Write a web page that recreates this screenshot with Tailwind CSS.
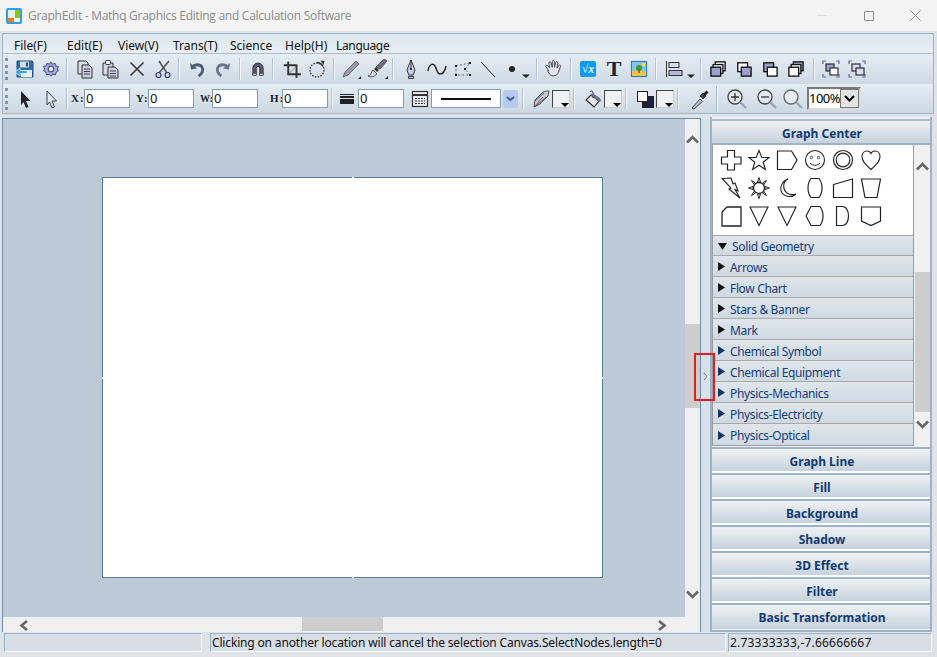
<!DOCTYPE html>
<html><head><meta charset="utf-8"><script src="https://cdn.jsdelivr.net/npm/@tailwindcss/browser@4"></script></head>
<body class="m-0 overflow-hidden">
<div class="w-[937px] h-[657px] overflow-hidden flex flex-col bg-[#dfe3e8] font-['Noto_Sans','Open_Sans',sans-serif] text-[12px] leading-none text-black">

<!-- title bar -->
<div class="h-[31px] shrink-0 bg-[#f3f3f3] flex items-center relative">
  <svg class="ml-[6px] w-[16px] h-[16px]" viewBox="0 0 16 16"><rect width="16" height="16" rx="2" fill="#2a9ee8"/><rect x="2" y="2" width="7" height="8" fill="#e8f3e0"/><rect x="9" y="2" width="5" height="8" fill="#8cc814"/><rect x="2" y="10" width="6" height="4" fill="#f07a1c"/><rect x="8" y="10" width="6" height="4" fill="#f4f4f4"/></svg>
  <span class="ml-[6px] text-[#8a8a8a] text-[12px] tracking-[-0.27px] font-['Open_Sans']">GraphEdit - Mathq Graphics Editing and Calculation Software</span>
  <div class="ml-auto flex items-center">
    <div class="w-[10px] h-px bg-[#dcdcdc] mr-[37px]"></div>
    <div class="w-[10px] h-[10px] border border-[#8a8a8a] rounded-[1px] mr-[36px]"></div>
    <svg class="w-[11px] h-[11px] mr-[16px]" viewBox="0 0 11 11"><path d="M.5.5l10 10M10.500.5l-10 10" stroke="#8a8a8a" fill="none"/></svg>
  </div>
</div>
<div class="h-[2px] shrink-0"></div>

<!-- bars -->
<div class="mx-[2px] w-[932px] shrink-0 border border-[#9db4c8] h-[81px] flex flex-col overflow-hidden">
  <!-- menu -->
  <div class="h-[20px] shrink-0 bg-gradient-to-b from-[#dce6ef] to-[#e8eef4] border-b border-[#a9bfd0] flex items-center text-[#111] text-[12px] pt-[4px]">
    <span class="ml-[11px] w-[53px]">File(F)</span>
    <span class="w-[51px]">Edit(E)</span>
    <span class="w-[55px]">View(V)</span>
    <span class="w-[57px]">Trans(T)</span>
    <span class="w-[55px]">Science</span>
    <span class="w-[51px]">Help(H)</span>
    <span class="tracking-[-0.35px]">Language</span>
  </div>
  <!-- toolbar 1 -->
  <div class="h-[30px] shrink-0 bg-gradient-to-b from-[#e6edf4] to-[#ced9e3] flex items-center">
    <div class="ml-[2px] w-[3px] h-[22px] border-l-[3px] border-dotted border-[#7f97ad]"></div>
    <svg class="ml-[5px] w-[24px] h-[24px]" viewBox="0 0 24 24"><path d="M4 4h15l1 1v15H4z" fill="#2d6cab" stroke="#27507c"/><rect x="7" y="4.500" width="9" height="6" fill="#d4dde6"/><rect x="13" y="5.500" width="2" height="4" fill="#27507c"/><rect x="8" y="13" width="11" height="7" fill="#e8eef4"/><path d="M2 15l5-4v2.500h7v3H7V19z" fill="#35a0ee" stroke="#fff" stroke-width=".7"/></svg>
    <svg class="ml-[2px] w-[24px] h-[24px]" viewBox="-3 -3 30 30"><path d="M12 3.500l2 2.500 3-1 1 3 3 1-1 3 1 2-2.500 2-1 3-3-.5-2.500 2-2.500-2-3 .5-1-3L3 14l1-2-1-3 3-1 1-3 3 1z" fill="#a9afe0" stroke="#4c5190" stroke-width="1.300"/><circle cx="12" cy="12" r="3.500" fill="#e8ecf7" stroke="#4c5190" stroke-width="1.500"/></svg>
    <div class="ml-[3px] w-[2px] h-[22px] bg-[#f3f6f9] border-l border-[#b4c4d2]"></div>
    <svg class="ml-[5px] w-[24px] h-[24px]" viewBox="0 0 24 24"><path d="M5 4h8l2 2v11H5z" fill="#d8dbe8" stroke="#333"/><path d="M9 8h7l3 3v10H9z" fill="#c9cde4" stroke="#333"/><path d="M11 12h6M11 14.500h6M11 17h6" stroke="#444"/></svg>
    <svg class="ml-[1px] w-[24px] h-[24px]" viewBox="0 0 24 24"><path d="M5 6h10v12H5z" fill="#d5d8e8" stroke="#333"/><rect x="7.500" y="3.500" width="5" height="4" rx="1" fill="#eef" stroke="#333"/><path d="M10 10h7l3 3v8H10z" fill="#ccd0e6" stroke="#333"/><path d="M12 14h6M12 16.500h6M12 19h6" stroke="#444"/></svg>
    <svg class="ml-[3px] w-[24px] h-[24px]" viewBox="0 0 24 24"><path d="M5.500 5.500l13 13M18.500 5.500l-13 13" stroke="#333" stroke-width="1.500" fill="none"/></svg>
    <svg class="ml-[2px] w-[24px] h-[24px]" viewBox="0 0 24 24"><path d="M8 4l8 12M18 4L8 16" stroke="#555" stroke-width="1.600" fill="none"/><circle cx="7.500" cy="18" r="2.500" fill="none" stroke="#34348a" stroke-width="1.200"/><circle cx="16.500" cy="18" r="2.500" fill="none" stroke="#34348a" stroke-width="1.200"/></svg>
    <div class="ml-[3px] w-[2px] h-[22px] bg-[#f3f6f9] border-l border-[#b4c4d2]"></div>
    <svg class="ml-[5px] w-[24px] h-[24px]" viewBox="0 0 24 24"><path d="M5 6l1 6.500 6-1z" fill="#4d5a78"/><path d="M7 10c3-3 8-3 10 0 2 3 0 7-3.500 9" fill="none" stroke="#4d5a78" stroke-width="2.800"/></svg>
    <svg class="ml-[2px] w-[24px] h-[24px]" viewBox="0 0 24 24"><path d="M19 6l-1 6.500-6-1z" fill="#6a7590"/><path d="M17 10c-3-3-8-3-10 0-2 3 0 7 3.500 9" fill="none" stroke="#6a7590" stroke-width="2.800"/></svg>
    <div class="ml-[4px] w-[2px] h-[22px] bg-[#f3f6f9] border-l border-[#b4c4d2]"></div>
    <svg class="ml-[5px] w-[24px] h-[24px]" viewBox="-2 -2 28 28"><path d="M6 19V11a6 6 0 0 1 12 0v8h-4v-8a2 2 0 0 0-4 0v8z" fill="#5a5a78" stroke="#2a2a3a"/><path d="M6 17h4v2.500H6zM14 17h4v2.500h-4z" fill="#ccc" stroke="#333" stroke-width=".7"/></svg>
    <div class="ml-[2px] w-[2px] h-[22px] bg-[#f3f6f9] border-l border-[#b4c4d2]"></div>
    <svg class="ml-[6px] w-[24px] h-[24px]" viewBox="-4 -4 32 32"><path d="M7 2v17h17" fill="none" stroke="#333" stroke-width="2.600"/><path d="M1 7h17v17" fill="none" stroke="#333" stroke-width="2.600"/><path d="M8 18L18 8" stroke="#666"/></svg>
    <svg class="ml-[1px] w-[24px] h-[24px]" viewBox="0 0 24 24"><circle cx="12" cy="13" r="7" fill="none" stroke="#333" stroke-width="1.300" stroke-dasharray="1.600 1.300"/><path d="M12 5.500a7 7 0 0 1 6 4" fill="none" stroke="#333" stroke-width="1.500"/><path d="M15.500 3.500l4 .5-1 4z" fill="#333"/></svg>
    <div class="ml-[4px] w-[2px] h-[22px] bg-[#f3f6f9] border-l border-[#b4c4d2]"></div>
    <svg class="ml-[4px] w-[24px] h-[24px]" viewBox="0 0 24 24"><path d="M4 20l2-5L17 4l3 3L9 18z" fill="#9a9aa8" stroke="#55556a" stroke-width=".8"/><path d="M19 22h3v-3z" fill="#222"/></svg>
    <svg class="ml-[2px] w-[24px] h-[24px]" viewBox="0 0 24 24"><path d="M3 19c3 0 3-4 5-6l4 4c-2 2-5 4-9 2z" fill="#d8d8e4" stroke="#333" stroke-width=".8"/><path d="M9 12l2-2 3 3-2 2z" fill="#333"/><path d="M11 10l8-8 3 2-7 8z" fill="#6d6d85" stroke="#333" stroke-width=".7"/><path d="M20 22h3v-3z" fill="#222"/></svg>
    <div class="ml-[3px] w-[2px] h-[22px] bg-[#f3f6f9] border-l border-[#b4c4d2]"></div>
    <svg class="ml-[5px] w-[24px] h-[24px]" viewBox="0 0 24 24"><path d="M12 3l4 10-1.800 5H9.800L8 13z" fill="#c8cce8" stroke="#222" stroke-width=".9"/><path d="M12 3v9" stroke="#222" stroke-width=".8"/><circle cx="12" cy="12" r="1.100" fill="#222"/><path d="M9.500 19.500h5v2h-5z" fill="#d8dcf0" stroke="#222" stroke-width=".9"/></svg>
    <svg class="ml-[2px] w-[24px] h-[24px]" viewBox="0 0 24 24"><path d="M3 14c1-7 5-8 7-5s2 8 5 8 5-3 6-8" fill="none" stroke="#222" stroke-width="1.400"/></svg>
    <svg class="ml-[2px] w-[24px] h-[24px]" viewBox="0 0 24 24"><path d="M5 9l14-3-5 6 5 6H5z" fill="none" stroke="#444" stroke-width=".8" stroke-dasharray="2 2"/><path d="M4 8h2v2H4zM18 5h2v2h-2zM13 11h2v2h-2zM18 17h2v2h-2zM4 17h2v2H4z" fill="#222"/></svg>
    <svg class="ml-[1px] w-[24px] h-[24px]" viewBox="0 0 24 24"><path d="M5 5l14 15" stroke="#222" stroke-width="1"/></svg>
    <svg class="w-[24px] h-[24px]" viewBox="0 0 24 24"><circle cx="12" cy="12" r="3" fill="#222"/></svg>
    <svg class="-ml-[2px] w-[8px] h-[24px]" viewBox="0 0 8 24"><path d="M0 17.500h8L4 21z" fill="#222"/></svg>
    <div class="ml-[6px] w-[2px] h-[22px] bg-[#f3f6f9] border-l border-[#b4c4d2]"></div>
    <svg class="ml-[4px] w-[24px] h-[24px]" viewBox="-2 -2 28 28"><path d="M6 14L2.500 9.500c-1-1.500 1-2.500 2-1.500L7 10.500 6 5c0-2 2-2 2.500 0l1.500 5V3.500c0-2 2.500-2 2.500 0V10l1.500-5.500c.5-2 2.500-1.500 2.500.5l-1 6 2-3c1-1.500 3-.5 2 1.500l-2.500 6.500c-1 2.500-2.500 4-5.500 4-4 0-5-2-7-6z" fill="#e6e6f0" stroke="#3f3f54" stroke-width="1.100"/></svg>
    <div class="ml-[4px] w-[2px] h-[22px] bg-[#f3f6f9] border-l border-[#b4c4d2]"></div>
    <div class="ml-[4px] w-[24px] h-[24px] flex items-center justify-center"><div class="w-[16px] h-[16px] rounded-[2px] bg-[#0a9bf5] text-white font-['Liberation_Serif'] font-bold italic text-[12px] flex items-center justify-center">√x</div></div>
    <div class="ml-[2px] w-[24px] h-[24px] flex items-center justify-center font-['Liberation_Serif'] font-bold text-[22px] text-[#1c2236]">T</div>
    <svg class="ml-[1px] w-[24px] h-[24px]" viewBox="0 0 24 24"><rect x="4.500" y="4.500" width="15" height="15" fill="#f7d25a" stroke="#2a80c8" stroke-width="1.200"/><rect x="5" y="5" width="14" height="9" fill="#7fc5ee"/><rect x="15" y="6" width="3" height="3" fill="#f8de50"/><rect x="5" y="14" width="14" height="5" fill="#f3c345"/><circle cx="12" cy="11" r="3" fill="#3f9a28"/><rect x="11.300" y="12" width="1.500" height="4" fill="#7a5a22"/></svg>
    <div class="ml-[4px] w-[2px] h-[22px] bg-[#f3f6f9] border-l border-[#b4c4d2]"></div>
    <svg class="ml-[5px] w-[24px] h-[24px]" viewBox="0 0 24 24"><path d="M4.500 4v16" stroke="#333"/><rect x="7" y="5.500" width="10" height="5" fill="#d8dcf0" stroke="#333"/><rect x="7" y="13.500" width="13" height="5" fill="#b4b8e2" stroke="#333"/></svg>
    <svg class="ml-[1px] w-[8px] h-[24px]" viewBox="0 0 8 24"><path d="M0 17.500h8L4 21z" fill="#222"/></svg>
    <div class="ml-[5px] w-[2px] h-[22px] bg-[#f3f6f9] border-l border-[#b4c4d2]"></div>
    <svg class="ml-[4px] w-[24px] h-[24px]" viewBox="-1.500 -1.500 27 27"><rect x="9" y="4" width="11" height="10" fill="#fff" stroke="#111" stroke-width="1.500"/><rect x="6.500" y="7" width="11" height="10" fill="#fff" stroke="#111" stroke-width="1.500"/><rect x="4" y="10" width="11" height="10" fill="#9c9fd0" stroke="#111" stroke-width="1.500"/></svg>
    <svg class="ml-[2px] w-[24px] h-[24px]" viewBox="-1.500 -1.500 27 27"><rect x="5" y="5" width="11" height="10" fill="#fff" stroke="#111" stroke-width="1.500"/><rect x="9" y="10" width="11" height="10" fill="#9c9fd0" stroke="#111" stroke-width="1.500"/></svg>
    <svg class="ml-[2px] w-[24px] h-[24px]" viewBox="-1.500 -1.500 27 27"><rect x="5" y="5" width="11" height="10" fill="#9c9fd0" stroke="#111" stroke-width="1.500"/><rect x="9" y="10" width="11" height="10" fill="#fff" stroke="#111" stroke-width="1.500"/></svg>
    <svg class="ml-[2px] w-[24px] h-[24px]" viewBox="-1.500 -1.500 27 27"><rect x="9" y="4" width="11" height="10" fill="#9c9fd0" stroke="#111" stroke-width="1.500"/><rect x="6.500" y="7" width="11" height="10" fill="#fff" stroke="#111" stroke-width="1.500"/><rect x="4" y="10" width="11" height="10" fill="#fff" stroke="#111" stroke-width="1.500"/></svg>
    <div class="ml-[5px] w-[2px] h-[22px] bg-[#f3f6f9] border-l border-[#b4c4d2]"></div>
    <svg class="ml-[4px] w-[24px] h-[24px]" viewBox="0 0 24 24"><path d="M4 7V4h3M17 4h3v3M20 17v3h-3M7 20H4v-3" fill="none" stroke="#6668a8" stroke-width="1.200"/><rect x="7" y="7" width="8" height="7" fill="#9c9fd0" stroke="#222" stroke-width="1.100"/><rect x="11" y="11" width="8" height="7" fill="#fff" stroke="#222" stroke-width="1.100"/></svg>
    <svg class="ml-[2px] w-[24px] h-[24px]" viewBox="0 0 24 24"><path d="M4 7V4h3M17 4h3v3M20 17v3h-3M7 20H4v-3" fill="none" stroke="#6668a8" stroke-width="1.200"/><rect x="7" y="7" width="8" height="7" fill="#d8dcf0" stroke="#222" stroke-width="1.100"/><rect x="11" y="11" width="8" height="7" fill="#d8dcf0" stroke="#222" stroke-width="1.100"/></svg>
  </div>
  <!-- toolbar 2 -->
  <div class="flex-1 bg-gradient-to-b from-[#e4ecf3] to-[#cdd8e2] flex items-center">
    <div class="ml-[2px] w-[3px] h-[22px] border-l-[3px] border-dotted border-[#7f97ad]"></div>
    <svg class="ml-[5px] w-[24px] h-[24px]" viewBox="0 0 24 24"><path d="M8 4l9.500 10h-4.500l2.500 6-2.500 1-2.500-6L8 18z" fill="#1f1f28"/></svg>
    <svg class="ml-[2px] w-[24px] h-[24px]" viewBox="0 0 24 24"><path d="M8 4l9.500 10h-4.500l2.500 6-2.500 1-2.500-6L8 18z" fill="#e4e8f2" stroke="#333" stroke-width=".9"/></svg>
    <div class="ml-[3px] w-[2px] h-[22px] bg-[#f3f6f9] border-l border-[#b4c4d2]"></div>
    <span class="ml-[3px] w-[13px] font-['Liberation_Serif'] font-bold text-[11px] text-[#222] tracking-[1px]">X:</span>
    <div class="w-[46px] h-[19px] bg-white border border-[#7f9db9] pl-[1px] flex items-center text-[13px] text-[#111]">0</div>
    <span class="ml-[6px] w-[12px] font-['Liberation_Serif'] font-bold text-[11px] text-[#222] tracking-[1px]">Y:</span>
    <div class="w-[46px] h-[19px] bg-white border border-[#7f9db9] pl-[1px] flex items-center text-[13px] text-[#111]">0</div>
    <span class="ml-[6px] w-[12px] font-['Liberation_Serif'] font-bold text-[10px] text-[#222]">W:</span>
    <div class="w-[46px] h-[19px] bg-white border border-[#7f9db9] pl-[1px] flex items-center text-[13px] text-[#111]">0</div>
    <span class="ml-[12px] w-[12px] font-['Liberation_Serif'] font-bold text-[11px] text-[#222] tracking-[1px]">H:</span>
    <div class="w-[46px] h-[19px] bg-white border border-[#7f9db9] pl-[1px] flex items-center text-[13px] text-[#111]">0</div>
    <div class="ml-[3px] w-[2px] h-[22px] bg-[#f3f6f9] border-l border-[#b4c4d2]"></div>
    <div class="ml-[7px] w-[14px] flex flex-col gap-[1px]"><div class="h-[1px] bg-[#222]"></div><div class="h-[2px] bg-[#222]"></div><div class="h-[5px] bg-[#222]"></div></div>
    <div class="ml-[4px] w-[46px] h-[19px] bg-white border border-[#7f9db9] pl-[1px] flex items-center text-[13px] text-[#111]">0</div>
    <svg class="ml-[4px] w-[24px] h-[24px]" viewBox="0 0 24 24"><rect x="4.500" y="4.500" width="15" height="15" fill="#e8ecf2" stroke="#333" stroke-width="1.200"/><path d="M5 8h14" stroke="#333" stroke-width="2"/><path d="M7 11.500h10M7 14h10M7 16.500h10" stroke="#333" stroke-dasharray="2 1"/></svg>
    <div class="-ml-[1px] w-[70px] h-[19px] bg-white border border-[#7f9db9] flex items-center justify-center"><div class="w-[50px] h-[2px] bg-[#111]"></div></div>
    <div class="ml-[2px] w-[15px] h-[18px] rounded-[2px] bg-[#b7c9ef] flex items-center justify-center"><svg class="w-[9px] h-[6px]" viewBox="0 0 9 6"><path d="M1 1l3.500 3L8 1" fill="none" stroke="#3d5f9a" stroke-width="2"/></svg></div>
    <div class="ml-[4px] w-[2px] h-[22px] bg-[#f3f6f9] border-l border-[#b4c4d2]"></div>
    <svg class="ml-[5px] w-[24px] h-[24px]" viewBox="0 0 24 24"><path d="M5 20l1-7 8-8c2-1 4-1 6-1l-1 5-8 8z" fill="#c8c8d4" stroke="#444" stroke-width=".9"/><path d="M5 20l9-10M7 19l10-9M6 14l9-8" stroke="#444" stroke-width=".8" fill="none"/></svg>
    <div class="-ml-[1px] w-[18px] h-[18px] bg-[#eef1f4] border border-[#444] border-r-[#ccc] border-b-[#ccc] relative"><div class="absolute right-0 bottom-0 w-0 h-0 border-x-[4px] border-x-transparent border-t-[4px] border-t-black"></div></div>
    <div class="ml-[3px] w-[2px] h-[22px] bg-[#f3f6f9] border-l border-[#b4c4d2]"></div>
    <svg class="ml-[6px] w-[24px] h-[24px]" viewBox="0 0 24 24"><path d="M10 8l8 6-5 6-8-7z" fill="#e4e6f0" stroke="#222" stroke-width="1.100"/><path d="M9 5c1-2 3-1 3 1v5" fill="none" stroke="#222"/><path d="M11 6l8 5 1 3-2 1-8-7z" fill="#6f7088"/></svg>
    <div class="-ml-[1px] w-[18px] h-[18px] bg-[#eef1f4] border border-[#444] border-r-[#ccc] border-b-[#ccc] relative"><div class="absolute right-0 bottom-0 w-0 h-0 border-x-[4px] border-x-transparent border-t-[4px] border-t-black"></div></div>
    <div class="ml-[3px] w-[2px] h-[22px] bg-[#f3f6f9] border-l border-[#b4c4d2]"></div>
    <svg class="ml-[6px] w-[24px] h-[24px]" viewBox="0 0 24 24"><rect x="9" y="9" width="12" height="12" fill="#202038"/><rect x="4.500" y="4.500" width="10" height="10" fill="#fff" stroke="#222"/></svg>
    <div class="-ml-[1px] w-[18px] h-[18px] bg-[#eef1f4] border border-[#444] border-r-[#ccc] border-b-[#ccc] relative"><div class="absolute right-0 bottom-0 w-0 h-0 border-x-[4px] border-x-transparent border-t-[4px] border-t-black"></div></div>
    <div class="ml-[3px] w-[2px] h-[22px] bg-[#f3f6f9] border-l border-[#b4c4d2]"></div>
    <svg class="ml-[9px] w-[24px] h-[24px]" viewBox="0 0 24 24"><path d="M4 21l8-9 2.500 2.500L6 22z" fill="#b9bdd6" stroke="#222" stroke-width=".8"/><path d="M12 9l3-3 3 3-3 3z" fill="#444" stroke="#222" stroke-width=".8"/><path d="M15 7l3.500-3.500 2 2L17 9z" fill="#222"/></svg>
    <div class="ml-[4px] w-[2px] h-[26px] bg-[#f3f6f9] border-l border-[#a8bccd]"></div>
    <svg class="ml-[7px] w-[24px] h-[24px]" viewBox="0 0 24 24"><circle cx="10" cy="10" r="7" fill="#e4e8f2" stroke="#444" stroke-width="1.300"/><path d="M6 10h8M10 6v8" stroke="#333" stroke-width="1.300"/><path d="M15 15l6 6" stroke="#9aa2b8" stroke-width="2.400"/></svg>
    <svg class="ml-[6px] w-[24px] h-[24px]" viewBox="0 0 24 24"><circle cx="10" cy="10" r="7" fill="#e4e8f2" stroke="#444" stroke-width="1.300"/><path d="M6 10h8" stroke="#333" stroke-width="1.300"/><path d="M15 15l6 6" stroke="#9aa2b8" stroke-width="2.400"/></svg>
    <svg class="ml-[2px] w-[24px] h-[24px]" viewBox="0 0 24 24"><circle cx="10" cy="10" r="7" fill="#e8ecf4" stroke="#666" stroke-width="1.300"/><path d="M15 15l6 6" stroke="#9aa2b8" stroke-width="2.400"/></svg>
    <div class="ml-[2px] w-[54px] h-[23px] flex bg-white border-2 border-[#7b7b7b] border-r-[#dcdcdc] border-b-[#dcdcdc]">
      <span class="flex-1 flex items-center text-[13px] overflow-hidden tracking-[-0.5px]">100%</span>
      <div class="w-[19px] bg-[#e4e4e4] border border-[#777] flex items-center justify-center"><svg class="w-[11px] h-[7px]" viewBox="0 0 11 7"><path d="M1 1l4.500 4.500L10 1" fill="none" stroke="#000" stroke-width="2"/></svg></div>
    </div>
  </div>
</div>

<div class="h-[4px] shrink-0"></div>

<!-- main -->
<div class="h-[514px] shrink-0 flex">
  <div class="ml-[2px] w-[699px] flex flex-col border-l border-t border-r border-[#6e8ca8]">
    <div class="flex-1 flex min-h-0">
      <div class="w-[682px] bg-[#bccad8] pt-[58px] pl-[99px]">
        <div class="w-[501px] h-[401px] bg-white border border-[#5a7d9f] relative">
          <div class="absolute left-[249px] -top-px w-[2px] h-[1px] bg-white"></div>
          <div class="absolute left-[249px] -bottom-px w-[2px] h-[1px] bg-white"></div>
          <div class="absolute -left-px top-[199px] w-[1px] h-[2px] bg-white"></div>
          <div class="absolute -right-px top-[199px] w-[1px] h-[2px] bg-white"></div>
        </div>
      </div>
      <div class="w-[15px] bg-[#f0f0f0] flex flex-col items-center relative">
        <svg class="absolute top-[16px] w-[13px] h-[9px]" viewBox="0 0 13 9"><path d="M1 7.500l5.500-5.500L12 7.500" fill="none" stroke="#666" stroke-width="2.600"/></svg>
        <div class="absolute top-[205px] w-[15px] h-[84px] bg-[#cdcdcd]"></div>
        <svg class="absolute top-[471px] w-[13px] h-[9px]" viewBox="0 0 13 9"><path d="M1 1.500l5.500 5.500L12 1.500" fill="none" stroke="#666" stroke-width="2.600"/></svg>
      </div>
    </div>
    <div class="h-[15px] shrink-0 bg-[#f0f0f0] relative">
      <svg class="absolute left-[16px] top-[3px] w-[10px] h-[11px]" viewBox="0 0 10 11"><path d="M8 1L2.500 5.500 8 10" fill="none" stroke="#666" stroke-width="2.600"/></svg>
      <div class="absolute left-[299px] top-0 w-[81px] h-[14px] bg-[#cdcdcd]"></div>
      <svg class="absolute left-[654px] top-[3px] w-[10px] h-[11px]" viewBox="0 0 10 11"><path d="M2 1l5.500 4.500L2 10" fill="none" stroke="#666" stroke-width="2.600"/></svg>
    </div>
  </div>

  <!-- splitter -->
  <div class="w-[9px] shrink-0 bg-[#d8e1e9] relative">
    <svg class="absolute left-[2px] top-[254px] w-[7px] h-[9px]" viewBox="0 0 7 9"><path d="M3 1l3 3.500-3 3.500" fill="none" stroke="#fff" stroke-width="1.200"/><path d="M1 1l3 3.500-3 3.500" fill="none" stroke="#5f6d7c" stroke-width="1.200" stroke-dasharray="1 .6"/></svg>
    <div class="absolute -left-[7px] top-[235px] w-[21px] h-[48px] border-2 border-[#e21e24]"></div>
  </div>

  <!-- right panel -->
  <div class="w-[222px] shrink-0 flex flex-col border-x-2 border-b-2 border-[#9db4c8] -mt-[1px] pt-[2px] bg-[#eef0f2]">
    <div class="h-[26px] shrink-0 bg-gradient-to-b from-[#eff2f5] to-[#c6d2dc] border-b-2 border-[#9db4c8] border-t-2 border-t-[#a7bccd] flex items-center justify-center font-bold text-[#103a75] text-[12px] pt-[4px] pl-[2px]">Graph Center</div>
    <div class="h-[301px] shrink-0 flex">
      <div class="w-[202px] flex flex-col border-r border-b border-[#9c9c9c] border-l">
        <div class="h-[90px] bg-white grid grid-cols-[repeat(6,28px)] grid-rows-[repeat(3,28px)] pl-[4px] pt-[1px]">
          <svg viewBox="0 0 28 28"><path d="M10.500 4.500h7v6.500h6.500v7h-6.500v6h-7v-6H4.500v-7h6z" fill="none" stroke="#222" stroke-width="1.200"/></svg>
          <svg viewBox="0 0 28 28"><path d="M14 4.500l2.800 7h7.200l-5.800 4.700 2.200 7.300-6.400-4.300-6.400 4.300 2.200-7.300-5.800-4.700h7.200z" fill="none" stroke="#222" stroke-width="1.100"/></svg>
          <svg viewBox="0 0 28 28"><path d="M4.500 5h14l5.500 9-5.500 9.500H4.500z" fill="none" stroke="#222" stroke-width="1.200"/></svg>
          <svg viewBox="0 0 28 28"><circle cx="14" cy="14" r="9.500" fill="none" stroke="#222" stroke-width="1.100"/><circle cx="10.500" cy="11.500" r="1.200" fill="none" stroke="#222" stroke-width=".8"/><circle cx="17.500" cy="11.500" r="1.200" fill="none" stroke="#222" stroke-width=".8"/><path d="M9 17c3 3 7 3 10 0" fill="none" stroke="#222"/></svg>
          <svg viewBox="0 0 28 28"><circle cx="14" cy="14" r="9.500" fill="none" stroke="#222" stroke-width="1.200"/><circle cx="14" cy="14" r="6.800" fill="none" stroke="#222" stroke-width="1.200"/></svg>
          <svg viewBox="0 0 28 28"><path d="M14 23.500C8 18 5 15 5 10.500 5 7 7.500 5 10 5c2 0 3.300 1 4 2.500C14.700 6 16 5 18 5c2.500 0 5 2 5 5.500 0 4.500-3 7.500-9 13z" fill="none" stroke="#222" stroke-width="1.100"/></svg>
          <svg viewBox="0 0 28 28"><path d="M5 4.500l9-.5 2 6 2-1 3 8-3-1.500L23 24 12 15l2-1-9-9.500z" fill="none" stroke="#222" stroke-width="1.100"/></svg>
          <svg viewBox="0 0 28 28"><circle cx="14" cy="14" r="5.500" fill="none" stroke="#222" stroke-width="1.300"/><path d="M14 3.500l1.500 4.500-3 0zM14 24.500l1.500-4.500h-3zM3.500 14l4.500 1.500v-3zM24.500 14L20 15.500v-3zM6.500 6.500l4 2.500-1.500 1.500zM21.500 21.500l-4-2.500 1.500-1.500zM21.500 6.500l-2.500 4-1.500-1.500zM6.500 21.500l2.500-4 1.500 1.500z" fill="none" stroke="#222"/></svg>
          <svg viewBox="0 0 28 28"><path d="M15 5c-5 2-6 10-1 14 3 2 6 2 9 1-4 4-11 3-14-1-3-5 0-12 6-14z" fill="none" stroke="#222" stroke-width="1.100"/></svg>
          <svg viewBox="0 0 28 28"><path d="M10 4.500h8c4 5 4 14 0 19h-8c-4-5-4-14 0-19z" fill="none" stroke="#222" stroke-width="1.200"/></svg>
          <svg viewBox="0 0 28 28"><path d="M4.500 10.500L23.500 5v18.500h-19z" fill="none" stroke="#222" stroke-width="1.200"/></svg>
          <svg viewBox="0 0 28 28"><path d="M4.500 5h19l-3.500 18.500H8z" fill="none" stroke="#222" stroke-width="1.200"/></svg>
          <svg viewBox="0 0 28 28"><path d="M10 5h14v19H5V10z" fill="none" stroke="#222" stroke-width="1.300"/></svg>
          <svg viewBox="0 0 28 28"><path d="M5 5h18l-9 18.500z" fill="none" stroke="#222" stroke-width="1.100"/></svg>
          <svg viewBox="0 0 28 28"><path d="M5 5h18l-9 18.500z" fill="none" stroke="#222" stroke-width="1.100"/></svg>
          <svg viewBox="0 0 28 28"><path d="M10 4.500h9c4 5 4 14 0 19h-9l-5-9.500z" fill="none" stroke="#222" stroke-width="1.200"/></svg>
          <svg viewBox="0 0 28 28"><path d="M7.500 4.500h6c8 0 8 19 0 19h-6z" fill="none" stroke="#222" stroke-width="1.200"/></svg>
          <svg viewBox="0 0 28 28"><path d="M4.500 5h19v14L14 23.500 4.500 19z" fill="none" stroke="#222" stroke-width="1.200"/></svg>
        </div>
        <div class="h-[21px] bg-gradient-to-b from-[#dfe6ec] to-[#cfd9e1] border-y border-t-[#a8a8a8] border-b-[#a8a8a8] flex items-center text-[#153c7e] tracking-[-0.35px]"><svg class="ml-[5px] mt-[1px] w-[9px] h-[9px]" viewBox="0 0 9 9"><path d="M0 1h9L4.500 8z" fill="#111"/></svg><span class="ml-[5px] pt-[3px]">Solid Geometry</span></div>
        <div class="h-[21px] bg-gradient-to-b from-[#dfe6ec] to-[#cfd9e1] border-b border-b-[#a8a8a8] flex items-center text-[#153c7e] tracking-[-0.35px]"><svg class="ml-[5px] mt-[1px] w-[7px] h-[9px]" viewBox="0 0 7 9"><path d="M0 0l7 4.500L0 9z" fill="#111"/></svg><span class="ml-[5px] pt-[4px]">Arrows</span></div>
        <div class="h-[21px] bg-gradient-to-b from-[#dfe6ec] to-[#cfd9e1] border-b border-b-[#a8a8a8] flex items-center text-[#153c7e] tracking-[-0.35px]"><svg class="ml-[5px] mt-[1px] w-[7px] h-[9px]" viewBox="0 0 7 9"><path d="M0 0l7 4.500L0 9z" fill="#111"/></svg><span class="ml-[5px] pt-[4px]">Flow Chart</span></div>
        <div class="h-[21px] bg-gradient-to-b from-[#dfe6ec] to-[#cfd9e1] border-b border-b-[#a8a8a8] flex items-center text-[#153c7e] tracking-[-0.35px]"><svg class="ml-[5px] mt-[1px] w-[7px] h-[9px]" viewBox="0 0 7 9"><path d="M0 0l7 4.500L0 9z" fill="#111"/></svg><span class="ml-[5px] pt-[4px]">Stars &amp; Banner</span></div>
        <div class="h-[21px] bg-gradient-to-b from-[#dfe6ec] to-[#cfd9e1] border-b border-b-[#a8a8a8] flex items-center text-[#153c7e] tracking-[-0.35px]"><svg class="ml-[5px] mt-[1px] w-[7px] h-[9px]" viewBox="0 0 7 9"><path d="M0 0l7 4.500L0 9z" fill="#111"/></svg><span class="ml-[5px] pt-[4px]">Mark</span></div>
        <div class="h-[21px] bg-gradient-to-b from-[#dfe6ec] to-[#cfd9e1] border-b border-b-[#a8a8a8] flex items-center text-[#153c7e] tracking-[-0.35px]"><svg class="ml-[5px] mt-[1px] w-[7px] h-[9px]" viewBox="0 0 7 9"><path d="M0 0l7 4.500L0 9z" fill="#123466"/></svg><span class="ml-[5px] pt-[4px]">Chemical Symbol</span></div>
        <div class="h-[21px] bg-gradient-to-b from-[#dfe6ec] to-[#cfd9e1] border-b border-b-[#a8a8a8] flex items-center text-[#153c7e] tracking-[-0.35px]"><svg class="ml-[5px] mt-[1px] w-[7px] h-[9px]" viewBox="0 0 7 9"><path d="M0 0l7 4.500L0 9z" fill="#123466"/></svg><span class="ml-[5px] pt-[4px]">Chemical Equipment</span></div>
        <div class="h-[21px] bg-gradient-to-b from-[#dfe6ec] to-[#cfd9e1] border-b border-b-[#a8a8a8] flex items-center text-[#153c7e] tracking-[-0.35px]"><svg class="ml-[5px] mt-[1px] w-[7px] h-[9px]" viewBox="0 0 7 9"><path d="M0 0l7 4.500L0 9z" fill="#123466"/></svg><span class="ml-[5px] pt-[4px]">Physics-Mechanics</span></div>
        <div class="h-[21px] bg-gradient-to-b from-[#dfe6ec] to-[#cfd9e1] border-b border-b-[#a8a8a8] flex items-center text-[#153c7e] tracking-[-0.35px]"><svg class="ml-[5px] mt-[1px] w-[7px] h-[9px]" viewBox="0 0 7 9"><path d="M0 0l7 4.500L0 9z" fill="#123466"/></svg><span class="ml-[5px] pt-[4px]">Physics-Electricity</span></div>
        <div class="h-[21px] bg-gradient-to-b from-[#dfe6ec] to-[#cfd9e1] flex items-center text-[#153c7e] tracking-[-0.35px]"><svg class="ml-[5px] mt-[1px] w-[7px] h-[9px]" viewBox="0 0 7 9"><path d="M0 0l7 4.500L0 9z" fill="#123466"/></svg><span class="ml-[5px] pt-[2px]">Physics-Optical</span></div>
      </div>
      <div class="w-[16px] bg-[#f0f0f0] relative">
        <svg class="absolute left-[2px] top-[17px] w-[13px] h-[9px]" viewBox="0 0 13 9"><path d="M1 7.500l5.500-5.500L12 7.500" fill="none" stroke="#666" stroke-width="2.600"/></svg>
        <div class="absolute left-[1px] top-[127px] w-[15px] h-[140px] bg-[#cdcdcd]"></div>
        <svg class="absolute left-[2px] top-[275px] w-[13px] h-[9px]" viewBox="0 0 13 9"><path d="M1 1.500l5.500 5.500L12 1.500" fill="none" stroke="#666" stroke-width="2.600"/></svg>
      </div>
    </div>
    <div class="h-[26px] mt-[1px] shrink-0 bg-gradient-to-b from-[#eff2f5] to-[#c6d2dc] border-t-2 border-b-2 border-t-[#9db4c8] border-b-white flex items-center justify-center font-bold text-[#103a75] text-[12px] pt-[4px] pl-[2px]">Graph Line</div>
    <div class="h-[26px] shrink-0 bg-gradient-to-b from-[#eff2f5] to-[#c6d2dc] border-t-2 border-b-2 border-t-[#9db4c8] border-b-white flex items-center justify-center font-bold text-[#103a75] text-[12px] pt-[4px] pl-[2px]">Fill</div>
    <div class="h-[26px] shrink-0 bg-gradient-to-b from-[#eff2f5] to-[#c6d2dc] border-t-2 border-b-2 border-t-[#9db4c8] border-b-white flex items-center justify-center font-bold text-[#103a75] text-[12px] pt-[4px] pl-[2px]">Background</div>
    <div class="h-[26px] shrink-0 bg-gradient-to-b from-[#eff2f5] to-[#c6d2dc] border-t-2 border-b-2 border-t-[#9db4c8] border-b-white flex items-center justify-center font-bold text-[#103a75] text-[12px] pt-[4px] pl-[2px]">Shadow</div>
    <div class="h-[26px] shrink-0 bg-gradient-to-b from-[#eff2f5] to-[#c6d2dc] border-t-2 border-b-2 border-t-[#9db4c8] border-b-white flex items-center justify-center font-bold text-[#103a75] text-[12px] pt-[4px] pl-[2px]">3D Effect</div>
    <div class="h-[26px] shrink-0 bg-gradient-to-b from-[#eff2f5] to-[#c6d2dc] border-t-2 border-b-2 border-t-[#9db4c8] border-b-white flex items-center justify-center font-bold text-[#103a75] text-[12px] pt-[4px] pl-[2px]">Filter</div>
    <div class="h-[26px] shrink-0 bg-gradient-to-b from-[#eff2f5] to-[#c6d2dc] border-t-2 border-t-[#9db4c8] flex items-center justify-center font-bold text-[#103a75] text-[12px] pt-[2px] pl-[2px]">Basic Transformation</div>
  </div>
</div>

<!-- status -->
<div class="flex mt-[1px] h-[19px] shrink-0 text-[12px] text-[#111]">
  <div class="ml-[4px] w-[198px] bg-[#d8dee6] border border-[#9db4c8] border-r-white border-b-white"></div>
  <div class="ml-[8px] w-[516px] bg-[#d8dee6] border border-[#9db4c8] border-r-white border-b-white flex items-center pl-[1px] whitespace-nowrap tracking-[-0.16px]">Clicking on another location will cancel the selection Canvas.SelectNodes.length=0</div>
  <div class="ml-[2px] w-[204px] bg-[#d8dee6] border border-[#9db4c8] border-r-white border-b-white flex items-center pl-[1px] tracking-[0.2px]">2.73333333,-7.66666667</div>
</div>
</div>
</body></html>
